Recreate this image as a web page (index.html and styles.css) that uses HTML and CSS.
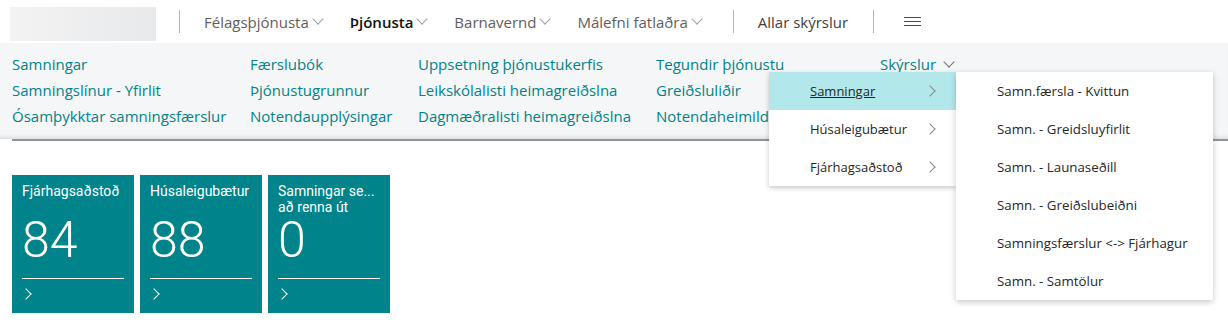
FILE: index.html
```html
<!DOCTYPE html>
<html lang="is">
<head>
  <meta charset="UTF-8" />
  <title>Hlutverkamiðstöð</title>
  <link rel="stylesheet" href="styles.css">
</head>
<body>

  <div class="topbar">
    <div class="logo"></div>
    <div class="sep"></div>
    <div class="nav-item">Félagsþjónusta<span class="chev"></span></div>
    <div class="nav-item active">Þjónusta<span class="chev"></span></div>
    <div class="nav-item">Barnavernd<span class="chev"></span></div>
    <div class="nav-item">Málefni fatlaðra<span class="chev"></span></div>
    <div class="sep wide"></div>
    <div class="nav-item plain">Allar skýrslur</div>
    <div class="sep"></div>
    <div class="burger">
      <span></span><span></span><span></span>
    </div>
  </div>

  <div class="subnav">
    <div class="col c1">
      <a>Samningar</a>
      <a>Samningslínur - Yfirlit</a>
      <a>Ósamþykktar samningsfærslur</a>
    </div>
    <div class="col c2">
      <a>Færslubók</a>
      <a>Þjónustugrunnur</a>
      <a>Notendaupplýsingar</a>
    </div>
    <div class="col c3">
      <a>Uppsetning þjónustukerfis</a>
      <a>Leikskólalisti heimagreiðslna</a>
      <a>Dagmæðralisti heimagreiðslna</a>
    </div>
    <div class="col c4">
      <a>Tegundir þjónustu</a>
      <a>Greiðsluliðir</a>
      <a>Notendaheimildir</a>
    </div>
    <div class="col c5">
      <a>Skýrslur<span class="chev teal"></span></a>
    </div>

    <!-- open Skýrslur menu -->
    <div class="menu">
      <div class="menu-item selected"><u>Samningar</u><span class="arrow"></span></div>
      <div class="menu-item">Húsaleigubætur<span class="arrow"></span></div>
      <div class="menu-item">Fjárhagsaðstoð<span class="arrow"></span></div>
    </div>
    <div class="submenu">
      <div class="sub-item">Samn.færsla - Kvittun</div>
      <div class="sub-item">Samn. - Greidsluyfirlit</div>
      <div class="sub-item">Samn. - Launaseðill</div>
      <div class="sub-item">Samn. - Greiðslubeiðni</div>
      <div class="sub-item">Samningsfærslur &lt;-&gt; Fjárhagur</div>
      <div class="sub-item">Samn. - Samtölur</div>
    </div>
  </div>
  <div class="rule"></div>

  <div class="tiles">
    <div class="tile">
      <div class="tile-title">Fjárhagsaðstoð</div>
      <div class="tile-num">84</div>
      <div class="tile-foot"><span class="tile-chev"></span></div>
    </div>
    <div class="tile">
      <div class="tile-title">Húsaleigubætur</div>
      <div class="tile-num">88</div>
      <div class="tile-foot"><span class="tile-chev"></span></div>
    </div>
    <div class="tile">
      <div class="tile-title">Samningar se...<br>að renna út</div>
      <div class="tile-num">0</div>
      <div class="tile-foot"><span class="tile-chev"></span></div>
    </div>
  </div>

</body>
</html>
```

FILE: styles.css
```css
body {
  margin: 0;
  font-family: 'Open Sans', 'Noto Sans', sans-serif;
  background: #fff;
  color: #262626;
  overflow: hidden;
}

.topbar {
  display: flex;
  align-items: center;
  height: 43px;
  padding-left: 10px;
}

.logo {
  align-self: flex-start;
  width: 146px;
  height: 34px;
  margin-top: 7px;
  margin-right: 23px;
  background: linear-gradient(to right, #f3f3f4, #e8e9ea);
}

.sep {
  width: 1px;
  height: 23px;
  background: #b5b5b5;
}

.sep.wide {
  margin-left: 28px;
}

.nav-item {
  display: flex;
  align-items: center;
  font-size: 15px;
  color: #5e5e5e;
  margin-left: 24px;
}

.nav-item.active {
  color: #111;
  font-weight: 600;
}

.nav-item.plain {
  margin-right: 25px;
  color: #3f3f3f;
}

.chev {
  display: inline-block;
  width: 7px;
  height: 7px;
  border-right: 1px solid #a0a0a0;
  border-bottom: 1px solid #a0a0a0;
  transform: rotate(45deg);
  margin: -5px 4px 0 5px;
}

.chev.teal {
  border-color: #66767a;
  margin-left: 9px;
}

.burger {
  display: flex;
  flex-direction: column;
  gap: 3px;
  margin-left: 30px;
}

.burger span {
  display: block;
  width: 17px;
  height: 1px;
  background: #444c56;
}

.subnav {
  position: relative;
  display: flex;
  background: #f5f6f7;
  padding: 8px 0 0 12px;
  height: 88px;
  box-shadow: inset 0 -5px 4px -3px #dcdcdc;
}

.col {
  display: flex;
  flex-direction: column;
}

.col a {
  display: flex;
  align-items: center;
  font-size: 15px;
  line-height: 26px;
  color: #00838a;
  white-space: nowrap;
}

.c1 { width: 238px; }
.c2 { width: 168px; }
.c3 { width: 238px; }
.c4 { width: 224px; }

.rule {
  height: 2px;
  margin-left: 12px;
  background: #8f939b;
}

.menu {
  position: absolute;
  left: 769px;
  top: 29px;
  width: 187px;
  background: #fff;
  box-shadow: 0 2px 5px rgba(0, 0, 0, 0.22);
  z-index: 2;
}

.menu-item {
  display: flex;
  align-items: center;
  justify-content: space-between;
  height: 38px;
  padding: 0 22px 0 41px;
  font-size: 13px;
}

.menu-item.selected {
  background: #b3e8eb;
}

.arrow {
  width: 7px;
  height: 7px;
  border-right: 1px solid #8a8a8a;
  border-top: 1px solid #8a8a8a;
  transform: rotate(45deg);
}

.submenu {
  position: absolute;
  left: 956px;
  top: 29px;
  width: 257px;
  background: #fff;
  box-shadow: 0 2px 6px rgba(0, 0, 0, 0.22);
  z-index: 2;
}

.sub-item {
  height: 38px;
  line-height: 38px;
  padding-left: 41px;
  font-size: 13.3px;
}

.tiles {
  display: flex;
  gap: 6px;
  padding: 34px 0 0 12px;
}

.tile {
  display: flex;
  flex-direction: column;
  width: 122px;
  height: 138px;
  background: #00838a;
  color: #fff;
  padding: 0 10px;
  box-sizing: border-box;
  font-family: Roboto, 'Open Sans', sans-serif;
}

.tile-title {
  font-size: 14px;
  line-height: 16px;
  margin-top: 8px;
  height: 32px;
  white-space: nowrap;
}

.tile-num {
  font-size: 50px;
  font-weight: 300;
  line-height: 50px;
  height: 58px;
}

.tile-foot {
  border-top: 1px solid #fff;
  margin-top: 5px;
  padding-top: 11px;
}

.tile-chev {
  display: block;
  width: 7px;
  height: 7px;
  border-right: 1px solid #fff;
  border-top: 1px solid #fff;
  transform: rotate(45deg);
  margin-left: 0;
}
```
